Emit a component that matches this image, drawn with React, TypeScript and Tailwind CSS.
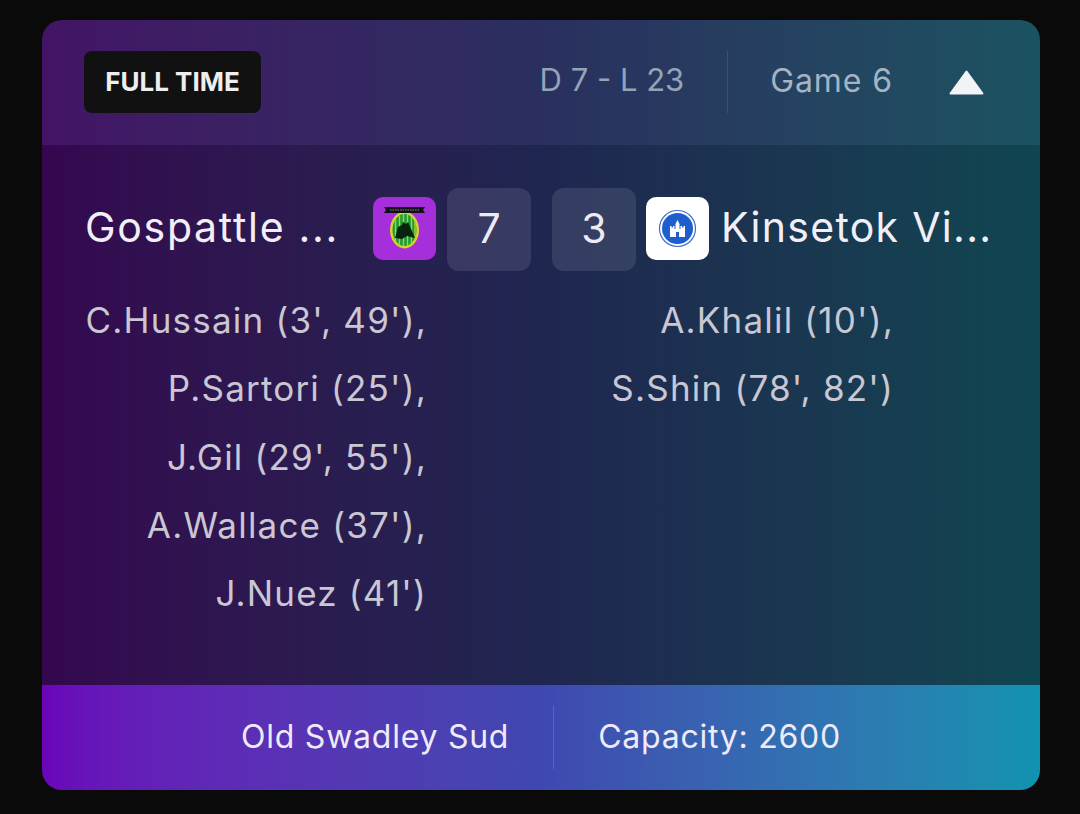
const FONT = "font-['Inter','Noto_Sans',sans-serif]";

const homeScorers = ["C.Hussain (3', 49'),", "P.Sartori (25'),", "J.Gil (29', 55'),", "A.Wallace (37'),", "J.Nuez (41')"];
const awayScorers = ["A.Khalil (10'),", "S.Shin (78', 82')"];

const HomeBadge = () => (
  <div className="mt-[9px] h-[63px] w-[63px] shrink-0 overflow-hidden rounded-[10px] bg-[#a62fdc]">
    <svg width="63" height="63" viewBox="0 0 63 63">
      <ellipse cx="31.500" cy="33" rx="14.500" ry="18.500" fill="#d9d32f" />
      <ellipse cx="31.500" cy="33" rx="12" ry="16" fill="#169c3c" />
      <path d="M22.500 22v22M26.500 19v28M30.500 17v32M34.500 17v32M38.500 19v28M42 23v20" stroke="#b5cf30" strokeWidth="1.400" />
      <path d="M22 41l3-11 4-2 1-3 3 2 2-2 4 9 3 7-8-2-5 3z" fill="#06240f" />
      <path d="M11 10h41l-2 3 2 3H11l2-3z" fill="#141018" />
      <path d="M17 13h29" stroke="#8d7fa0" strokeWidth="1" strokeDasharray="1.500 1" />
    </svg>
  </div>
);

const AwayBadge = () => (
  <div className="mt-[9px] h-[63px] w-[63px] shrink-0 overflow-hidden rounded-[10px] bg-white">
    <svg width="63" height="63" viewBox="0 0 63 63">
      <circle cx="31.500" cy="31.500" r="18" fill="#fff" stroke="#3f6fc4" strokeWidth="1.200" />
      <circle cx="31.500" cy="31.500" r="15.500" fill="#1d5fce" />
      <path d="M24 29h1.500v1.500H27V29h1.500v3h1v-5l2-4 2 4v5h1v-3H36v1.500h1.500V29H39v11H24z" fill="#fff" />
      <rect x="30" y="35" width="3" height="5" fill="#1d5fce" />
    </svg>
  </div>
);

const ScoreBox = ({ value }: { value: number }) => (
  <div className="flex h-[83px] w-[84px] items-center justify-center rounded-xl bg-white/10 pb-1 text-[41px] text-[#eceaf2]">
    {value}
  </div>
);

export default function App() {
  return (
    <div className={`min-h-[814px] bg-[#0a0a0a] px-[42px] pt-5 ${FONT}`}>
      <div className="w-[998px] overflow-hidden rounded-[20px]">
        <div className="flex h-[125px] items-center bg-gradient-to-r from-[#431466] via-[#2a2f5f] to-[#1a5360] pb-px pl-[42px] pr-[56px]">
          <div className="flex h-[62px] w-[177px] items-center justify-center rounded-lg bg-[#111111] pb-px text-[26px] font-bold text-[#eeeeee]">
            FULL TIME
          </div>
          <div className="mb-[3px] ml-auto text-[31px] text-[#94a3b8]">D 7 - L 23</div>
          <div className="ml-[43px] mr-[42px] h-[62px] w-px bg-white/10" />
          <div className="mb-[3px] text-[32px] tracking-[0.9px] text-[#a3b4c4]">Game 6</div>
          <svg className="ml-[56px]" width="35" height="25" viewBox="0 0 35 25">
            <path d="M17.500 1.500L33.500 23.500H1.500z" fill="#f1f3f6" stroke="#f1f3f6" strokeWidth="2" strokeLinejoin="round" />
          </svg>
        </div>

        <div className="h-[540px] bg-gradient-to-r from-[#34074f] via-[#1f2650] to-[#0f4650] pl-[43px] pt-[43px]">
          <div className="flex h-[83px] items-start text-[41px] leading-[78px] text-[#f1eff5]">
            <div className="w-[288px] shrink-0 whitespace-nowrap tracking-[1.7px]">Gospattle ...</div>
            <HomeBadge />
            <div className="ml-[11px] flex gap-[21px]">
              <ScoreBox value={7} />
              <ScoreBox value={3} />
            </div>
            <div className="ml-[10px]">
              <AwayBadge />
            </div>
            <div className="ml-3 whitespace-nowrap tracking-[1.3px]">Kinsetok Vi...</div>
          </div>
          <div className="mt-[15px] flex whitespace-nowrap text-[35px] leading-[68.25px] tracking-[1.2px] text-[#c9c7d3]">
            <div className="w-[342px] text-right">
              {homeScorers.map((s) => (
                <div key={s}>{s}</div>
              ))}
            </div>
            <div className="ml-[125px] w-[342px] text-right">
              {awayScorers.map((s) => (
                <div key={s}>{s}</div>
              ))}
            </div>
          </div>
        </div>

        <div className="flex h-[105px] items-center justify-center bg-gradient-to-r from-[#6a05b9] via-[#3f48b0] to-[#0f93b0] pb-px text-[32px] tracking-[0.75px] text-[#efeafa]">
          <div>Old Swadley Sud</div>
          <div className="mx-[44px] h-[63px] w-px bg-white/15" />
          <div>Capacity: 2600</div>
        </div>
      </div>
    </div>
  );
}
